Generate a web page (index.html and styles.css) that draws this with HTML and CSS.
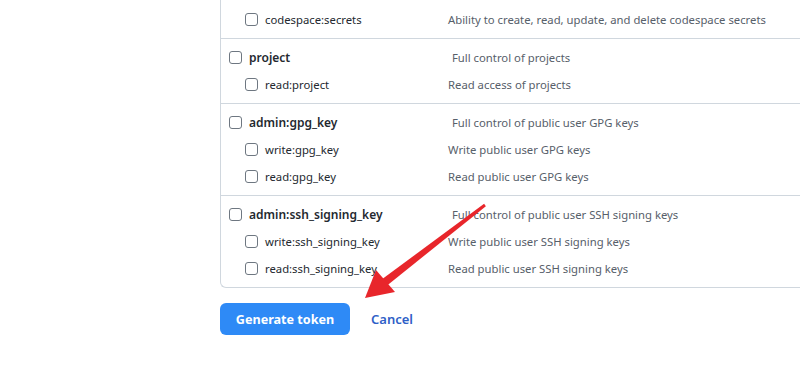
FILE: index.html
```html
<!DOCTYPE html>
<html lang="en">
<head>
    <meta charset="UTF-8">
    <meta name="viewport" content="width=device-width, initial-scale=1.0">
    <title>New personal access token - Scopes</title>
    <link rel="stylesheet" href="styles.css">
</head>
<body>
    <div class="page">
        <div class="scope-box">
            <div class="scope-group first">
                <div class="scope-row sub">
                    <label class="scope-name"><span class="check"></span>codespace:secrets</label>
                    <span class="scope-desc">Ability to create, read, update, and delete codespace secrets</span>
                </div>
            </div>

            <div class="scope-group">
                <div class="scope-row top">
                    <label class="scope-name"><span class="check"></span>project</label>
                    <span class="scope-desc">Full control of projects</span>
                </div>
                <div class="scope-row sub">
                    <label class="scope-name"><span class="check"></span>read:project</label>
                    <span class="scope-desc">Read access of projects</span>
                </div>
            </div>

            <div class="scope-group">
                <div class="scope-row top">
                    <label class="scope-name"><span class="check"></span>admin:gpg_key</label>
                    <span class="scope-desc">Full control of public user GPG keys</span>
                </div>
                <div class="scope-row sub">
                    <label class="scope-name"><span class="check"></span>write:gpg_key</label>
                    <span class="scope-desc">Write public user GPG keys</span>
                </div>
                <div class="scope-row sub">
                    <label class="scope-name"><span class="check"></span>read:gpg_key</label>
                    <span class="scope-desc">Read public user GPG keys</span>
                </div>
            </div>

            <div class="scope-group">
                <div class="scope-row top">
                    <label class="scope-name"><span class="check"></span>admin:ssh_signing_key</label>
                    <span class="scope-desc">Full control of public user SSH signing keys</span>
                </div>
                <div class="scope-row sub">
                    <label class="scope-name"><span class="check"></span>write:ssh_signing_key</label>
                    <span class="scope-desc">Write public user SSH signing keys</span>
                </div>
                <div class="scope-row sub">
                    <label class="scope-name"><span class="check"></span>read:ssh_signing_key</label>
                    <span class="scope-desc">Read public user SSH signing keys</span>
                </div>
            </div>
        </div>

        <div class="actions">
            <button class="generate-btn">Generate token</button>
            <a class="cancel-link" href="#">Cancel</a>
        </div>
    </div>

    <!-- annotation arrow drawn over the page -->
    <svg class="arrow" width="800" height="383" viewBox="0 0 800 383">
        <polygon points="485.9,206.2 484.1,203.8 382.6,278.8 387.4,285.2" fill="#e8262b"/>
        <polygon points="365,298 376,270 395,292" fill="#e8262b"/>
    </svg>
</body>
</html>
```

FILE: styles.css
```css
* {
    margin: 0;
    padding: 0;
    box-sizing: border-box;
}

body {
    font-family: "Noto Sans", "Open Sans", sans-serif;
    font-size: 11.3px;
    color: #24292f;
    background: #ffffff;
    width: 800px;
    height: 383px;
    overflow: hidden;
    position: relative;
}

.page {
    padding-left: 220px;
}

.scope-box {
    width: 580px;
    border-left: 1px solid #d0d7de;
    border-bottom: 1px solid #d0d7de;
    border-bottom-left-radius: 6px;
}

.scope-group {
    border-top: 1px solid #d0d7de;
    padding: 5px 0;
}

.scope-group.first {
    border-top: none;
    padding-top: 6px;
}

.scope-row {
    display: flex;
    align-items: center;
    height: 27px;
}

.scope-name {
    display: flex;
    align-items: center;
    white-space: nowrap;
}

.scope-row.top .scope-name {
    padding-left: 8px;
    width: 231px;
    font-size: 12px;
    font-weight: 600;
}

.scope-row.sub .scope-name {
    padding-left: 24px;
    width: 227px;
}

.check {
    width: 13px;
    height: 13px;
    border: 1px solid #6e7781;
    border-radius: 3px;
    margin-right: 7px;
    flex-shrink: 0;
}

.scope-desc {
    color: #57606a;
    white-space: nowrap;
}

.actions {
    display: flex;
    align-items: center;
    margin-top: 15px;
}

.generate-btn {
    width: 130px;
    height: 32px;
    background: #2e8af6;
    color: #ffffff;
    border: none;
    border-radius: 6px;
    font-family: inherit;
    font-size: 12.6px;
    font-weight: 700;
}

.cancel-link {
    margin-left: 21px;
    color: #2f5fc7;
    font-size: 13px;
    font-weight: 600;
    text-decoration: none;
}

.arrow {
    position: absolute;
    top: 0;
    left: 0;
    pointer-events: none;
}
```
